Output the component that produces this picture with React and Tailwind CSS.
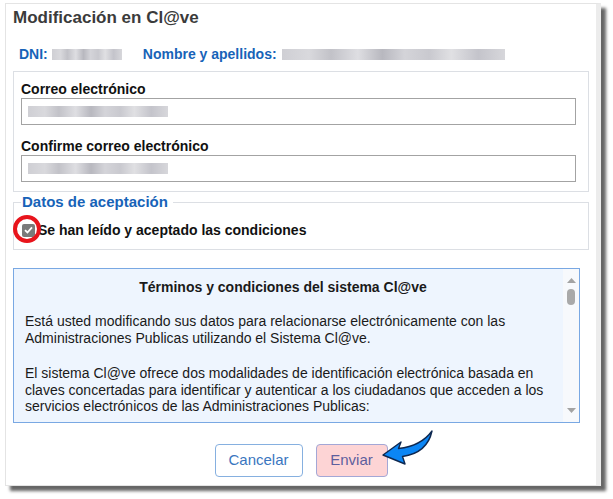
import React from "react";

function Blur({ className }) {
  return (
    <span
      className={
        "inline-block blur-[0.6px] bg-[linear-gradient(90deg,#cfcfd4_0%,#d9d9dd_12%,#c2c2c8_22%,#dedee2_34%,#b8b8bf_45%,#d4d4d9_55%,#c9c9cf_66%,#e0e0e3_76%,#c4c4cb_88%,#d7d7db_100%)] " +
        className
      }
    />
  );
}

function Field({ label, first }) {
  return (
    <div className={first ? "" : "mt-[12px]"}>
      <div className="text-[14px] leading-[18px] font-bold text-[#111]">{label}</div>
      <div className="h-[27px] border border-[#a3a3a3] flex items-center pl-[6px]">
        <Blur className="w-[140px] h-[11px]" />
      </div>
    </div>
  );
}

export default function App() {
  return (
    <div className="w-[613px] h-[499px] bg-white overflow-hidden font-['Liberation_Sans',Arial,sans-serif]">
      <div className="relative ml-[5px] mt-[3px] w-[596px] h-[483px] bg-white border-l border-t border-b border-[#e4e4e4] border-r-[5px] border-r-[#ececec] shadow-[5px_5px_3px_rgba(0,0,0,0.6)]">
        <h1 className="mt-[4px] pl-[7px] text-[17px] leading-[20px] font-bold text-[#3b3b3b]">
          Modificación en Cl@ve
        </h1>

        <div className="mt-[17px] pl-[13px] flex items-center text-[14px] leading-[18px] font-bold text-[#1763b8]">
          <span>DNI:</span>
          <Blur className="ml-[4px] w-[70px] h-[11px]" />
          <span className="ml-[21px]">Nombre y apellidos:</span>
          <Blur className="ml-[5px] w-[223px] h-[11px]" />
        </div>

        <div className="mt-[8px] ml-[7px] w-[576px] border border-[#dcdfe4] pt-[8px] pb-[9px] pl-[7px] pr-[12px]">
          <Field label="Correo electrónico" first />
          <Field label="Confirme correo electrónico" />
        </div>

        <fieldset className="mt-[1px] ml-[7px] w-[576px] border border-[#dcdfe4] px-[7px] pb-[10px]">
          <legend className="pl-[1px] pr-[5px] text-[15px] leading-[18px] font-bold text-[#1763b8]">
            Datos de aceptación
          </legend>
          <div className="mt-[10px] flex items-center h-[18px]">
            <span className="ml-[1px] w-[13px] h-[13px] rounded-[2px] bg-[#7a7a7a] flex items-center justify-center">
              <svg width="9" height="8" viewBox="0 0 9 8">
                <path d="M1 4.2 L3.4 6.5 L8 1.3" fill="none" stroke="#fff" strokeWidth="1.8" />
              </svg>
            </span>
            <span className="ml-[3px] text-[14px] leading-[18px] font-bold text-[#111]">
              Se han leído y aceptado las condiciones
            </span>
          </div>
        </fieldset>

        <div className="mt-[18px] ml-[7px] w-[567px] h-[155px] border border-[#79a8e3] bg-[#eef5fe] flex overflow-hidden">
          <div className="flex-1 pt-[9px] pl-[11px] pr-[14px] text-[14px] text-[#1a1a1a]">
            <div className="text-center font-bold leading-[18px] pr-[8px]">
              Términos y condiciones del sistema Cl@ve
            </div>
            <p className="mt-[17px] leading-[16.5px]">
              Está usted modificando sus datos para relacionarse electrónicamente con las Administraciones Publicas utilizando el Sistema Cl@ve.
            </p>
            <p className="mt-[19px] leading-[16.5px]">
              El sistema Cl@ve ofrece dos modalidades de identificación electrónica basada en claves concertadas para identificar y autenticar a los ciudadanos que acceden a los servicios electrónicos de las Administraciones Publicas:
            </p>
          </div>
          <div className="w-[16px] bg-[#f7f9fc] flex flex-col items-center">
            <svg className="mt-[9px]" width="9" height="5" viewBox="0 0 9 5">
              <path d="M0 5 L4.5 0 L9 5 Z" fill="#a3a3a3" />
            </svg>
            <span className="mt-[6px] w-[8px] h-[16px] rounded-full bg-[#a9a9a9]" />
            <div className="flex-1" />
            <svg className="mb-[9px]" width="9" height="5" viewBox="0 0 9 5">
              <path d="M0 0 L9 0 L4.5 5 Z" fill="#a3a3a3" />
            </svg>
          </div>
        </div>

        <div className="mt-[21px] flex justify-center gap-[13px]">
          <button className="w-[88px] h-[33px] rounded-[4px] border border-[#86b0e0] bg-white text-[15px] text-[#3a76c0]">
            Cancelar
          </button>
          <button className="w-[72px] h-[33px] rounded-[4px] border border-[#a3a7d6] bg-[#fdd4d5] text-[15px] text-[#5d5f9e]">
            Enviar
          </button>
        </div>

        <span className="absolute left-[7px] top-[211px] w-[28px] h-[28px] rounded-full border-[4px] border-[#e8141c]" />

        <svg className="absolute left-[372px] top-[424px]" width="62" height="42" viewBox="0 0 62 42">
          <path
            d="M5 27 L23 14 L20.5 20.5 C34 19 46 14 54 3 C51 17 42 26 24.5 28.5 L27 36 Z"
            fill="#0b86f5"
            stroke="#0e2850"
            strokeWidth="1.4"
            strokeLinejoin="round"
          />
        </svg>
      </div>
    </div>
  );
}
